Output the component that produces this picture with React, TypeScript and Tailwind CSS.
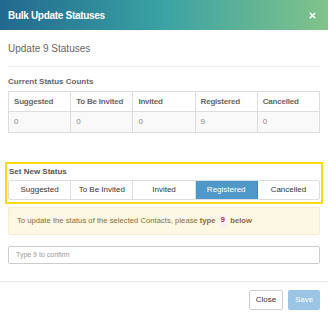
import { X } from 'lucide-react';

export default function App() {
  const statuses = ['Suggested', 'To Be Invited', 'Invited', 'Registered', 'Cancelled'];
  const counts = ['0', '0', '0', '9', '0'];
  const active = 'Registered';

  return (
    <div
      className="w-[328px] h-[316px] bg-white overflow-hidden flex flex-col"
      style={{ fontFamily: '"Liberation Sans", Arial, sans-serif' }}
    >
      {/* header */}
      <div className="h-[30px] shrink-0 px-2 flex items-center justify-between bg-[linear-gradient(90deg,#22688f_0%,#3aa3a3_50%,#82c38a_100%)]">
        <span className="text-[10px] font-bold text-white tracking-[-0.3px]">Bulk Update Statuses</span>
        <X className="w-[9px] h-[9px] text-white mr-[3px]" strokeWidth={4} />
      </div>

      <div className="px-2">
        <div className="pt-[12px] pb-[10px] border-b border-[#eeeeee]">
          <span className="block text-[10px] leading-[14px] text-[#666]">Update 9 Statuses</span>
        </div>

        <div className="mt-[10px] text-[8px] leading-[10px] font-bold text-[#666]">Current Status Counts</div>

        <table className="mt-[4px] w-full border-collapse table-fixed text-[8px] text-[#555]">
          <tbody>
            <tr className="h-[20px]">
              {statuses.map((s) => (
                <td key={s} className="border border-[#dddddd] px-[5px] font-bold text-[#666] tracking-[-0.2px]">{s}</td>
              ))}
            </tr>
            <tr className="h-[21px] bg-[#f9f9f9]">
              {counts.map((c, i) => (
                <td key={i} className="border border-[#dddddd] px-[5px] text-[#888]">{c}</td>
              ))}
            </tr>
          </tbody>
        </table>
      </div>

      {/* set new status, highlighted */}
      <div className="mx-[5px] mt-[29px] h-[42px] border-2 border-[#ffd90f] px-[1px] pt-[3px]">
        <div className="text-[8px] leading-[10px] font-bold text-[#555] pl-[1px]">Set New Status</div>
        <div className="mt-[3px] flex border border-[#dddddd] rounded-[2px] bg-white">
          {statuses.map((s) => (
            <div
              key={s}
              className={
                s === active
                  ? 'flex-1 h-[18px] flex items-center justify-center text-[8px] text-white bg-[#4f98c9] border-r border-[#3f87b8] last:border-r-0'
                  : 'flex-1 h-[18px] flex items-center justify-center text-[8px] text-[#333] border-r border-[#dddddd] last:border-r-0'
              }
            >
              {s}
            </div>
          ))}
        </div>
      </div>

      <div className="px-2">
        <div className="mt-[3px] h-[28px] flex items-center px-[8px] bg-[#fcf8e3] border border-[#faebcc] rounded-[2px] text-[7.7px] text-[#8a6d3b]">
          <span>To update the status of the selected Contacts, please</span>
          <span className="font-bold ml-[2px]">type</span>
          <span className="mx-[3px] px-[2px] bg-[#f9f2f4] text-[#c7254e] font-bold" style={{ fontFamily: '"Liberation Mono", monospace' }}>9</span>
          <span className="font-bold">below</span>
        </div>

        <div className="mt-[11px] h-[18px] flex items-center px-[7px] border border-[#cccccc] rounded-[2px] text-[7px] text-[#999]">
          Type 9 to confirm
        </div>
      </div>

      <div className="mt-[17px] border-t border-[#e5e5e5] px-2 pt-[8px] flex justify-end gap-[5px]">
        <div className="w-[34px] h-[20px] flex items-center justify-center border border-[#cccccc] rounded-[2px] text-[8px] text-[#333] bg-white">Close</div>
        <div className="w-[32px] h-[20px] flex items-center justify-center rounded-[2px] text-[8px] text-white bg-[#9ac5e5]">Save</div>
      </div>
    </div>
  );
}
